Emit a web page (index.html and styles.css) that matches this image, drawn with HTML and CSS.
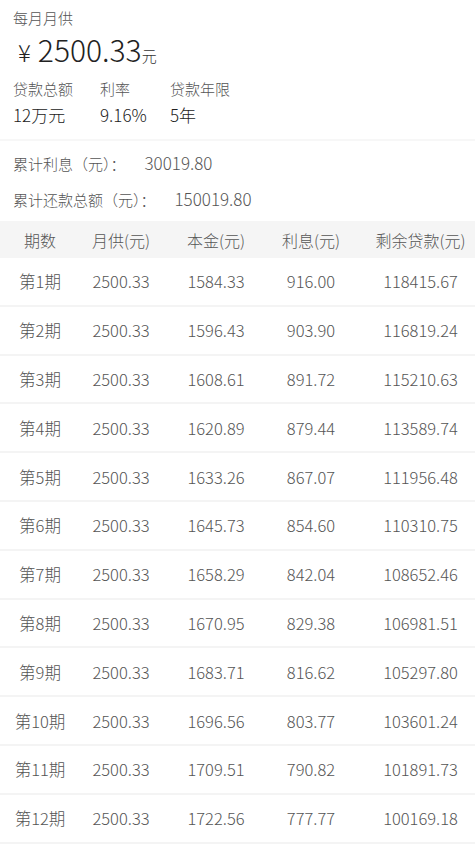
FILE: index.html
```html
<!DOCTYPE html>
<html lang="zh">
<head>
  <meta charset="UTF-8" />
  <title>每月月供</title>
  <meta name="viewport" content="width=device-width, initial-scale=1.0">
  <link rel="stylesheet" href="styles.css">
</head>
<body>
  <div class="summary">
    <div class="label">每月月供</div>
    <div class="monthly"><span class="yen">¥</span>2500.33<span class="unit">元</span></div>
    <div class="facts">
      <div class="fact">
        <div class="label">贷款总额</div>
        <div class="value">12万元</div>
      </div>
      <div class="fact">
        <div class="label">利率</div>
        <div class="value">9.16%</div>
      </div>
      <div class="fact">
        <div class="label">贷款年限</div>
        <div class="value">5年</div>
      </div>
    </div>
  </div>

  <div class="totals">
    <div class="total">累计利息（元）：<span class="num">30019.80</span></div>
    <div class="total">累计还款总额（元）：<span class="num">150019.80</span></div>
  </div>

  <div class="table">
    <div class="row head">
      <div>期数</div><div>月供(元)</div><div>本金(元)</div><div>利息(元)</div><div>剩余贷款(元)</div>
    </div>
    <div class="row"><div>第1期</div><div>2500.33</div><div>1584.33</div><div>916.00</div><div>118415.67</div></div>
    <div class="row"><div>第2期</div><div>2500.33</div><div>1596.43</div><div>903.90</div><div>116819.24</div></div>
    <div class="row"><div>第3期</div><div>2500.33</div><div>1608.61</div><div>891.72</div><div>115210.63</div></div>
    <div class="row"><div>第4期</div><div>2500.33</div><div>1620.89</div><div>879.44</div><div>113589.74</div></div>
    <div class="row"><div>第5期</div><div>2500.33</div><div>1633.26</div><div>867.07</div><div>111956.48</div></div>
    <div class="row"><div>第6期</div><div>2500.33</div><div>1645.73</div><div>854.60</div><div>110310.75</div></div>
    <div class="row"><div>第7期</div><div>2500.33</div><div>1658.29</div><div>842.04</div><div>108652.46</div></div>
    <div class="row"><div>第8期</div><div>2500.33</div><div>1670.95</div><div>829.38</div><div>106981.51</div></div>
    <div class="row"><div>第9期</div><div>2500.33</div><div>1683.71</div><div>816.62</div><div>105297.80</div></div>
    <div class="row"><div>第10期</div><div>2500.33</div><div>1696.56</div><div>803.77</div><div>103601.24</div></div>
    <div class="row"><div>第11期</div><div>2500.33</div><div>1709.51</div><div>790.82</div><div>101891.73</div></div>
    <div class="row"><div>第12期</div><div>2500.33</div><div>1722.56</div><div>777.77</div><div>100169.18</div></div>
  </div>
</body>
</html>
```

FILE: styles.css
```css
body {
  margin: 0;
  background: #ffffff;
  color: #333333;
  font-family: "Noto Sans CJK SC", "Noto Sans", sans-serif;
  font-weight: 300;
  overflow: hidden;
}
.summary {
  padding: 6px 13px 12px;
  border-bottom: 2px solid #f7f7f7;
}
.label {
  font-size: 15px;
  line-height: 24px;
  color: #555555;
}
.monthly {
  margin-top: 2px;
  font-size: 30px;
  line-height: 34px;
  color: #222222;
}
.yen {
  font-size: 24px;
  margin: 0 7px 0 5px;
}
.unit {
  font-size: 15px;
  color: #333333;
}
.facts {
  display: flex;
  margin-top: 4px;
}
.fact:nth-child(1) {
  width: 87px;
}
.fact:nth-child(2) {
  width: 70px;
}
.value {
  margin-top: 2px;
  font-size: 17px;
  line-height: 24px;
  color: #222222;
}
.totals {
  padding: 4px 13px 1px;
}
.total {
  font-size: 15px;
  line-height: 35px;
  color: #555555;
}
.num {
  margin-left: 19px;
  font-size: 17px;
  color: #555555;
}
.table {
  margin-top: 3px;
}
.row {
  display: grid;
  grid-template-columns: 80px 82px 108px 82px 1fr;
  align-items: center;
  height: 46.8px;
  border-bottom: 2px solid #f4f4f4;
  font-size: 16.5px;
  color: #555555;
  text-align: center;
}
.row div:last-child {
  padding-left: 14px;
}
.row.head {
  height: 37px;
  background: #f5f5f5;
  border-bottom: none;
  font-size: 16px;
  color: #555555;
}
```
